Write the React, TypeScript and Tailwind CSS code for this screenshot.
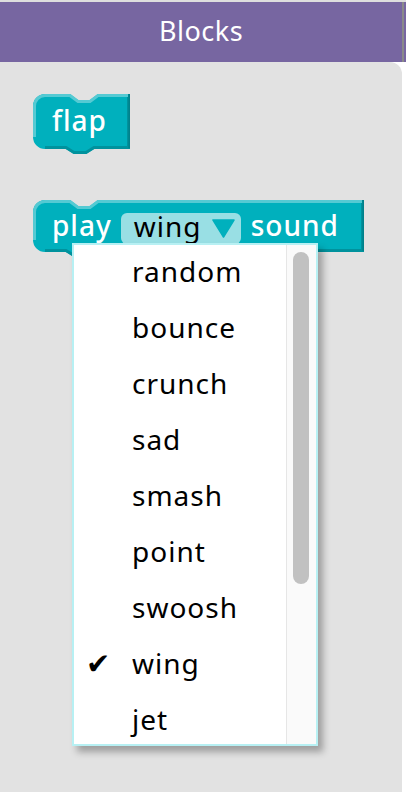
import React from 'react'

const sounds = ['random', 'bounce', 'crunch', 'sad', 'smash', 'point', 'swoosh', 'wing', 'jet']

// block outline: rounded left corners, notch on top, tab below
function blockPath(w: number, h: number) {
  return `M0,12 A12,12 0 0 1 12,0 H37 L45,6 H57 L65,0 H${w} V${h} H61 L53,${h + 5} H41 L33,${h} H12 A12,12 0 0 1 0,${h - 12} Z`
}

function BlockShape({ w, h }: { w: number; h: number }) {
  return (
    <svg className="absolute left-0 top-0 overflow-visible" width={w} height={h + 5} viewBox={`0 0 ${w} ${h + 5}`}>
      <path d={blockPath(w, h)} fill="#00b0bd" />
      <path
        d={`M${w - 1.5},0 V${h - 1.5} H61 L53,${h + 3.5} H41 L33,${h - 1.5} H12`}
        fill="none"
        stroke="#00929d"
        strokeWidth="3"
      />
      <path d={`M${w - 0.8},0 V${h - 1}`} fill="none" stroke="#00818b" strokeWidth="1.6" />
      <path
        d={`M1.5,${h - 12} V12 A10.5,10.5 0 0 1 12,1.5 H37 L45,7.5 H57 L65,1.5 H${w - 2}`}
        fill="none"
        stroke="#55cad3"
        strokeWidth="3"
      />
    </svg>
  )
}

export default function App() {
  return (
    <div className="relative w-[406px] h-[792px] bg-white overflow-hidden" style={{ fontFamily: '"Noto Sans", sans-serif' }}>
      <div className="h-[2px] bg-[#dedede]" />
      <div className="flex h-[60px] bg-[#7766a1]">
        <div className="w-[402px] flex items-center justify-center text-white text-[27px] tracking-[0.5px] pb-[2px]">Blocks</div>
        <div className="w-[2px] bg-[#8a8a8a]" />
      </div>

      <div className="w-[402px] h-[730px] bg-[#e2e2e2] rounded-tr-[12px] pt-[32px] pl-[33px]">
        {/* flap */}
        <div className="relative w-[97px] h-[55px]">
          <BlockShape w={97} h={55} />
          <div className="relative h-[55px] flex items-center pl-[19px] pb-[3px] text-white text-[28px] font-medium tracking-[1px]">
            flap
          </div>
        </div>

        {/* play sound */}
        <div className="relative w-[331px] h-[52px] mt-[51px]">
          <BlockShape w={331} h={52} />
          <div className="relative h-[52px] flex items-center pl-[19px] pb-[2px] text-white text-[28px] font-medium tracking-[1px]">
            <span>play</span>
            <div className="ml-[9px] w-[120px] h-[31px] mt-[7px] rounded-[6px] bg-[#99dfe4] flex items-center pl-[13px] text-black font-normal">
              <span className="-mt-[5px]">wing</span>
              <svg className="ml-[10px]" width="23" height="19" viewBox="0 0 23 19">
                <path d="M1,1 H22 L11.5,18 Z" fill="#00b0bd" stroke="#00b0bd" strokeWidth="1.5" strokeLinejoin="round" />
              </svg>
            </div>
            <span className="ml-[10px]">sound</span>
          </div>
        </div>
      </div>

      {/* dropdown menu */}
      <div className="absolute left-[72px] top-[243px] w-[246px] h-[503px] bg-white border-2 border-[#b7f0f3] shadow-[5px_6px_7px_rgba(0,0,0,0.3)] flex">
        <div className="flex-1 -mt-[2px]">
          {sounds.map((s) => (
            <div key={s} className="relative h-[56px] leading-[56px] pl-[58px] text-[28px] tracking-[1px] text-black">
              {s === 'wing' && (
                <span className="absolute left-[12px] top-[1px] text-[29px]" style={{ fontFamily: '"DejaVu Sans", sans-serif' }}>
                  ✔
                </span>
              )}
              {s}
            </div>
          ))}
        </div>
        <div className="w-[30px] bg-[#fafafa] border-l border-[#e6e6e6] pl-[6px] pt-[7px]">
          <div className="w-[16px] h-[332px] rounded-full bg-[#c1c1c1]" />
        </div>
      </div>
    </div>
  )
}
